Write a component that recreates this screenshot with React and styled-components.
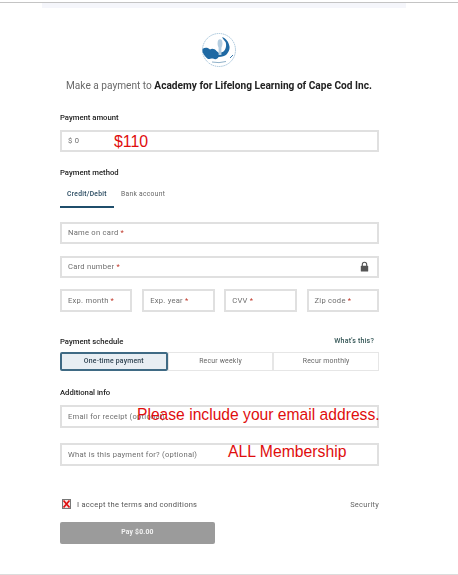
import React from "react";
import styled, { createGlobalStyle } from "styled-components";

const Global = createGlobalStyle`
  html, body { margin: 0; padding: 0; background: #fff; }
  body { font-family: Roboto, "Liberation Sans", sans-serif; color: #333; }
`;

const Page = styled.div`
  position: relative;
  width: 458px;
  height: 575px;
  overflow: hidden;
  background: #fff;
  display: flex;
  flex-direction: column;
`;
const TopRule = styled.div`
  margin-top: 2px;
  height: 1px;
  background: #c4c4c4;
  flex: none;
`;
const TopBand = styled.div`
  margin: 0 52px 0 42px;
  height: 5px;
  background: #f5f6fb;
  flex: none;
`;
const BottomRule = styled.div`
  position: absolute;
  left: 0;
  right: 0;
  bottom: 0;
  height: 1px;
  background: #dcdcdc;
`;
const Blurred = styled.div`
  filter: blur(0.5px);
  display: flex;
  flex-direction: column;
`;
const Logo = styled.svg`
  display: block;
  width: 36px;
  height: 36px;
  margin: 24px 0 0 201px;
`;
const Heading = styled.h1`
  margin: 12px 0 0 66px;
  height: 12px;
  line-height: 12px;
  font-size: 10.15px;
  font-weight: 400;
  color: #6a6a6a;
  white-space: nowrap;
  b { font-weight: 700; color: #222; }
`;
const Form = styled.div`
  width: 319px;
  margin-left: 60px;
  display: flex;
  flex-direction: column;
`;
const SectionLabel = styled.div`
  height: 10px;
  line-height: 10px;
  font-size: 7.7px;
  font-weight: 500;
  color: #222;
  margin-top: ${(p) => p.$top}px;
  white-space: nowrap;
`;
const Field = styled.div`
  box-sizing: border-box;
  display: flex;
  align-items: center;
  justify-content: space-between;
  height: ${(p) => p.$h || 22}px;
  margin-top: ${(p) => p.$top || 0}px;
  flex: ${(p) => (p.$grow ? "1 1 0" : "none")};
  min-width: 0;
  padding: 0 8px 1px 6px;
  border: 2px solid #e0e0e0;
  background: #fff;
  font-size: 7.6px;
  letter-spacing: 0.25px;
  color: #6e6e6e;
  white-space: nowrap;
`;
const Req = styled.span`
  color: #c0392b;
  margin-left: 2px;
`;
const Tabs = styled.div`
  display: flex;
  margin-top: 8px;
  height: 22px;
`;
const Tab = styled.div`
  width: ${(p) => p.$w}px;
  box-sizing: border-box;
  padding: 3px 0 0 ${(p) => p.$pad}px;
  font-size: 6.7px;
  line-height: 10px;
  letter-spacing: 0.3px;
  color: ${(p) => (p.$active ? "#23455c" : "#666")};
  font-weight: ${(p) => (p.$active ? 500 : 400)};
  border-bottom: ${(p) => (p.$active ? "2px solid #1f4e6b" : "none")};
  white-space: nowrap;
`;
const Row = styled.div`
  display: flex;
  gap: 9.7px;
  margin-top: 11px;
`;
const HeaderRow = styled.div`
  display: flex;
  justify-content: space-between;
  align-items: center;
  margin-top: 24px;
  height: 10px;
  padding-right: 5px;
`;
const InlineLabel = styled.span`
  font-size: 7.7px;
  font-weight: 500;
  color: #222;
`;
const Help = styled.span`
  font-size: 7px;
  font-weight: 500;
  letter-spacing: 0.2px;
  color: #355;
`;
const Segments = styled.div`
  display: flex;
  margin-top: 6px;
  height: 18.5px;
`;
const Segment = styled.div`
  flex: 1 1 0;
  box-sizing: border-box;
  display: flex;
  align-items: center;
  justify-content: center;
  font-size: 6.9px;
  letter-spacing: 0.2px;
  font-weight: ${(p) => (p.$active ? 500 : 400)};
  color: ${(p) => (p.$active ? "#2b3f4e" : "#666")};
  background: ${(p) => (p.$active ? "#e8eef3" : "#fff")};
  border: ${(p) => (p.$active ? "2px solid #3f6a84" : "1px solid #e6e6e6")};
  border-radius: ${(p) => (p.$active ? "2px" : "0")};
`;
const Terms = styled.div`
  display: flex;
  align-items: center;
  justify-content: space-between;
  margin-top: 32px;
  height: 12px;
`;
const TermsLeft = styled.div`
  display: flex;
  align-items: center;
  gap: 6px;
  padding-left: 2px;
  font-size: 7.55px;
  letter-spacing: 0.25px;
  color: #555;
`;
const Check = styled.svg`
  display: block;
  width: 9px;
  height: 10px;
`;
const Security = styled.span`
  font-size: 7.5px;
  letter-spacing: 0.25px;
  color: #666;
`;
const PayButton = styled.button`
  display: block;
  box-sizing: border-box;
  width: 155px;
  height: 21.5px;
  margin-top: 12px;
  padding: 0 0 2px;
  border: 0;
  border-radius: 2px;
  background: #9b9b9b;
  color: #f4f4f4;
  font-family: inherit;
  font-size: 6.8px;
  font-weight: 700;
  letter-spacing: 0.2px;
`;
const Note = styled.span`
  position: absolute;
  left: ${(p) => p.$x}px;
  top: ${(p) => p.$y}px;
  font-family: "Liberation Sans", Arial, sans-serif;
  font-size: ${(p) => p.$size}px;
  line-height: 18px;
  color: #e00d0d;
  white-space: nowrap;
`;

const Lock = () => (
  <svg width="9" height="11" viewBox="0 0 9 11" aria-hidden="true">
    <path d="M2.3 5V3.4a2.2 2.2 0 0 1 4.4 0V5" fill="none" stroke="#555" strokeWidth="1.1" />
    <rect x="0.8" y="4.8" width="7.4" height="5.7" rx="0.6" fill="#555" />
  </svg>
);

const required = (t) => (
  <span>
    {t}
    <Req>*</Req>
  </span>
);

export default function App() {
  return (
    <Page>
      <Global />
      <TopRule />
      <TopBand />
      <Blurred>
        <Logo viewBox="0 0 36 36" aria-label="Academy for Lifelong Learning logo">
          <circle cx="18" cy="18" r="16.5" fill="none" stroke="#8fb5d0" strokeWidth="0.8" strokeDasharray="1.5 0.7" />
          <path
            d="M1.5 17 C4 15 7 15.5 9 17.5 C11 16 14 17 15.5 19 L18 21 C20 20.5 22 20 23 19 C25.5 16.5 25.5 12 24.5 10 C23.5 8.5 22.5 7.5 21 5.2 C24.5 5.5 28 10 28.6 15 C28.8 18 27 21 25.5 22.5 C24 24 21 25 17.5 25 C16.5 27 14.5 27.8 12 26.5 C10 26 8.5 27.5 7 27 C4.5 25 2.5 22.5 1.5 20 Z"
            fill="#1f69a3"
          />
          <ellipse cx="19" cy="11.5" rx="2.4" ry="4.2" fill="#b4cde0" />
          <rect x="17.6" y="15" width="2.8" height="8" fill="#b4cde0" />
          <path d="M11 30 Q18 31.5 25 29.5" fill="none" stroke="#8fb0c8" strokeWidth="1" />
          <path d="M29 26 L32 23" stroke="#1f69a3" strokeWidth="0.9" />
        </Logo>
        <Heading>
          Make a payment to <b>Academy for Lifelong Learning of Cape Cod Inc.</b>
        </Heading>
        <Form>
          <SectionLabel $top={21}>Payment amount</SectionLabel>
          <Field $top={7}>$ 0</Field>

          <SectionLabel $top={16}>Payment method</SectionLabel>
          <Tabs>
            <Tab $w={54} $pad={7} $active>
              Credit/Debit
            </Tab>
            <Tab $w={70} $pad={7}>
              Bank account
            </Tab>
          </Tabs>
          <Field $top={14}>{required("Name on card")}</Field>
          <Field $top={12}>
            {required("Card number")}
            <Lock />
          </Field>
          <Row>
            <Field $grow $h={23}>{required("Exp. month")}</Field>
            <Field $grow $h={23}>{required("Exp. year")}</Field>
            <Field $grow $h={23}>{required("CVV")}</Field>
            <Field $grow $h={23}>{required("Zip code")}</Field>
          </Row>

          <HeaderRow>
            <InlineLabel>Payment schedule</InlineLabel>
            <Help>What's this?</Help>
          </HeaderRow>
          <Segments>
            <Segment $active>One-time payment</Segment>
            <Segment>Recur weekly</Segment>
            <Segment>Recur monthly</Segment>
          </Segments>

          <SectionLabel $top={17.5}>Additional info</SectionLabel>
          <Field $top={7} $h={23}>Email for receipt (optional)</Field>
          <Field $top={15} $h={23}>What is this payment for? (optional)</Field>

          <Terms>
            <TermsLeft>
              <Check viewBox="0 0 9 10" aria-hidden="true">
                <rect x="0.5" y="0.5" width="8" height="9" fill="#f4e6e6" stroke="#777" />
                <path d="M1.5 1.5 L7.5 8.5 M7.5 1.5 L1.5 8.5" stroke="#e01010" strokeWidth="1.7" />
              </Check>
              I accept the terms and conditions
            </TermsLeft>
            <Security>Security</Security>
          </Terms>
          <PayButton type="button">Pay $0.00</PayButton>
        </Form>
      </Blurred>
      <Note $x={114} $y={133} $size={15.9}>$110</Note>
      <Note $x={137} $y={406} $size={15.65}>Please include your email address.</Note>
      <Note $x={228} $y={443} $size={15.75}>ALL Membership</Note>
      <BottomRule />
    </Page>
  );
}
